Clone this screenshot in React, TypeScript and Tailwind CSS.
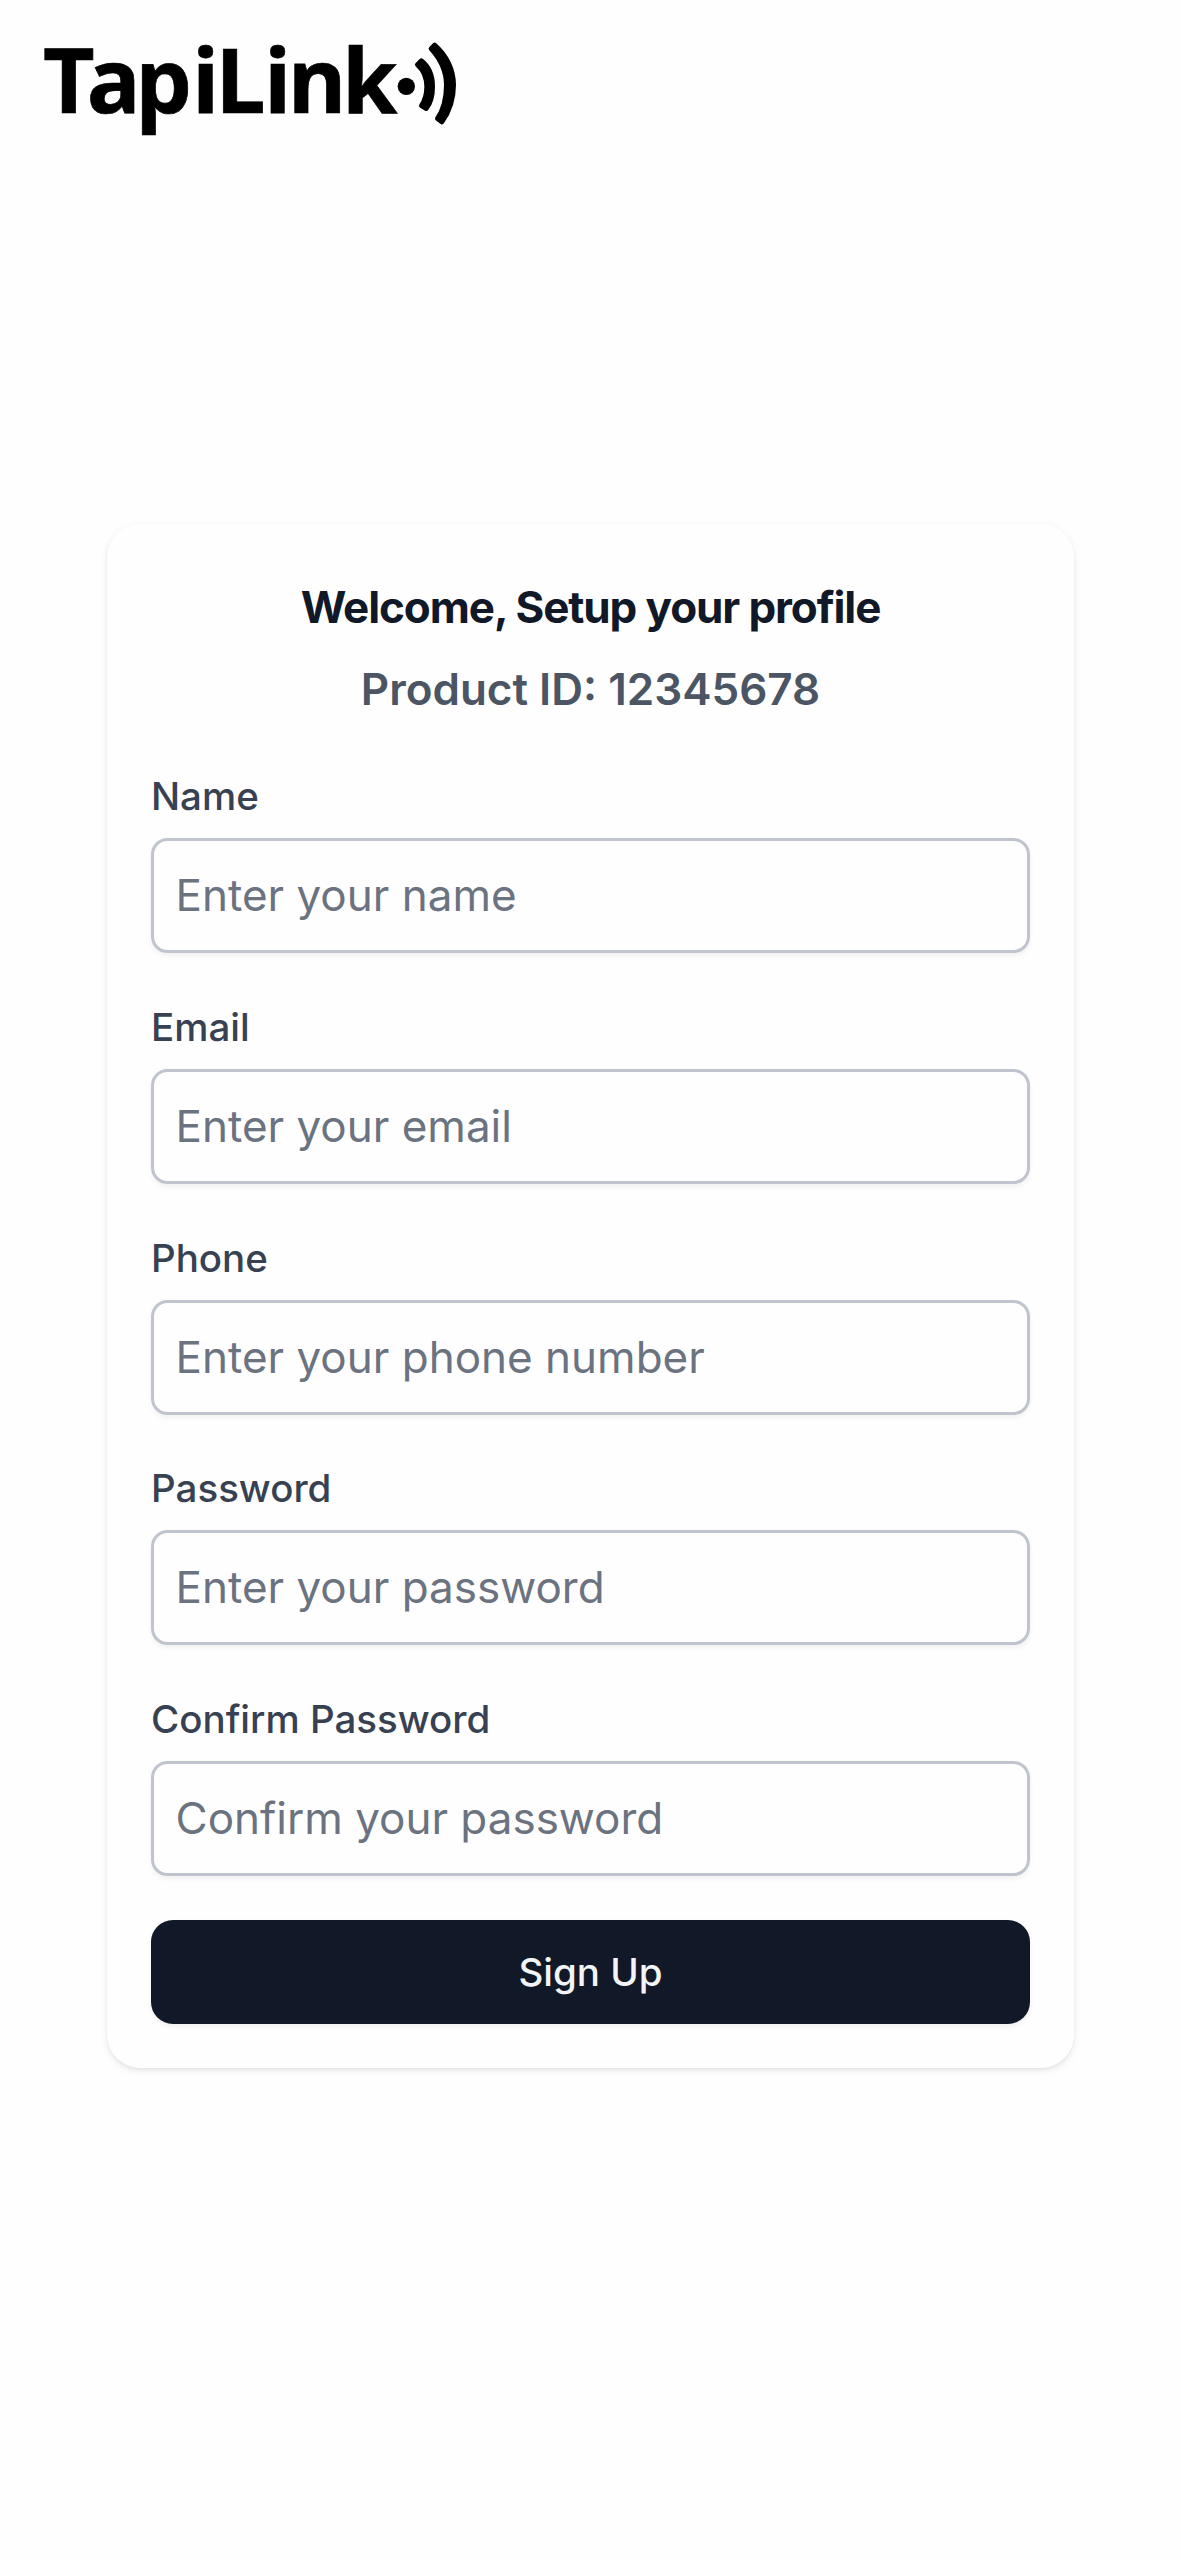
import React from 'react';

interface FieldProps {
  id: string;
  label: string;
  type?: string;
  placeholder: string;
}

const fields: FieldProps[] = [
  { id: 'name', label: 'Name', placeholder: 'Enter your name' },
  { id: 'email', label: 'Email', type: 'email', placeholder: 'Enter your email' },
  { id: 'phone', label: 'Phone', type: 'tel', placeholder: 'Enter your phone number' },
  { id: 'password', label: 'Password', type: 'password', placeholder: 'Enter your password' },
  { id: 'confirm', label: 'Confirm Password', type: 'password', placeholder: 'Confirm your password' },
];

const Logo: React.FC = () => (
  <svg
    width="440"
    height="120"
    viewBox="0 0 1320 360"
    role="img"
    aria-label="TapiLink"
    className="overflow-visible"
  >
    <text
      x="39 170 316 486 556 702 773 936"
      y="250"
      stroke="#000"
      strokeWidth="2"
      className="font-['Open_Sans',sans-serif] text-[268px] font-bold"
    >
      TapiLink
    </text>
    <circle cx="1129" cy="169" r="26" />
    <g stroke="#000" strokeWidth="14" strokeLinejoin="round">
      <path d="M1162 104 L1174 92 C1200 112 1208 140 1208 170 C1208 195 1200 222 1189 236 L1174 227 C1185 210 1190 190 1190 170 C1190 145 1180 120 1162 104Z" />
      <path d="M1203 56 L1214 45 C1250 76 1271 120 1271 165 C1271 208 1258 245 1236 276 L1222 266 C1241 238 1249 205 1249 165 C1249 125 1232 88 1203 56Z" />
    </g>
  </svg>
);

const Field: React.FC<FieldProps> = ({ id, label, type = 'text', placeholder }) => (
  <div>
    <label htmlFor={id} className="block text-[38.5px] leading-[55px] font-medium text-[#374151]">
      {label}
    </label>
    <input
      id={id}
      type={type}
      placeholder={placeholder}
      className="mt-[14px] block h-[115px] w-full rounded-[16.5px] border-3 border-[#c0c4ce] px-[21.5px] pb-px text-[44px] shadow-[0_2.75px_5.5px_rgba(0,0,0,0.05)] placeholder:text-[#6b7280]"
    />
  </div>
);

const App: React.FC = () => {
  return (
    <div className="flex h-[2560px] flex-col bg-[#fefefe] font-['Inter',sans-serif]">
      <header className="h-[524px] shrink-0 pt-[30px] pl-[30px]">
        <Logo />
      </header>

      <main className="mx-auto h-[1544px] w-[967px] rounded-[33px] bg-[#fefefe] px-[44px] pt-[50px] shadow-[0_2.75px_8.25px_rgba(0,0,0,0.07),0_2.75px_5.5px_-2.75px_rgba(0,0,0,0.1)]">
        <h1 className="text-center text-[44px] leading-[66px] font-bold tracking-[-0.025em] text-[#111827]">
          Welcome, Setup your profile
        </h1>
        <h2 className="mt-[16px] text-center text-[44px] leading-[66px] font-semibold text-[#4b5563]">
          Product ID: 12345678
        </h2>

        <form className="mt-[47px]">
          <div className="flex flex-col gap-[46.75px]">
            {fields.map((field) => (
              <Field key={field.id} {...field} />
            ))}
          </div>
          <button
            type="button"
            className="mt-[44px] block h-[104px] w-full rounded-[22px] bg-[#111827] pt-px text-[38.5px] font-medium text-gray-100 shadow-[0_2.75px_5.5px_rgba(0,0,0,0.05)]"
          >
            Sign Up
          </button>
        </form>
      </main>
    </div>
  );
};

export default App;
